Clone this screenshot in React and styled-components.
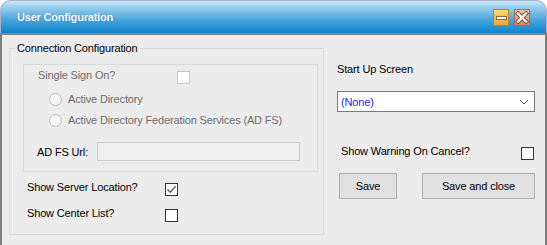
import React from "react"
import styled, { createGlobalStyle } from "styled-components"

const GlobalStyle = createGlobalStyle`
  html, body {
    margin: 0;
    padding: 0;
    background: #fff;
  }
  body {
    font-family: "Liberation Sans", Arial, sans-serif;
    font-size: 11px;
    letter-spacing: -0.15px;
  }
  * { box-sizing: border-box; }
`

const App = () => (
  <>
    <GlobalStyle />
    <Window>
      <TitleBar>
        <TitleText>User Configuration</TitleText>
        <TitleButtons>
          <MinButton>
            <MinBar />
          </MinButton>
          <CloseButton>
            <svg width="14" height="15" viewBox="0 0 14 15">
              <path d="M3 3.5 L11 11.5 M11 3.5 L3 11.5" stroke="#6b4a3a" strokeWidth="4.2" strokeLinecap="square" />
              <path d="M3 3.5 L11 11.5 M11 3.5 L3 11.5" stroke="#fff" strokeWidth="2.4" strokeLinecap="square" />
            </svg>
          </CloseButton>
        </TitleButtons>
      </TitleBar>

      <Body>
        <Group>
          <Legend>Connection Configuration</Legend>
          <DisabledPanel>
            <SsoRow>
              <Label $width={139} $disabled>Single Sign On?</Label>
              <CheckBox $disabled />
            </SsoRow>
            <RadioRow $top={10}>
              <Radio />
              <Label $disabled>Active Directory</Label>
            </RadioRow>
            <RadioRow $top={7}>
              <Radio />
              <Label $disabled>Active Directory Federation Services (AD FS)</Label>
            </RadioRow>
            <UrlRow>
              <Label $width={60}>AD FS Url:</Label>
              <UrlInput />
            </UrlRow>
          </DisabledPanel>
          <OptionRow $top={8}>
            <Label $width={138}>Show Server Location?</Label>
            <CheckBox>
              <svg width="11" height="11" viewBox="0 0 11 11">
                <path d="M1.5 5.5 L4.2 8.2 L9.6 2.2" fill="none" stroke="#5a5a5a" strokeWidth="1.3" />
              </svg>
            </CheckBox>
          </OptionRow>
          <OptionRow $top={12}>
            <Label $width={138}>Show Center List?</Label>
            <CheckBox />
          </OptionRow>
        </Group>

        <SideColumn>
          <Label>Start Up Screen</Label>
          <Select>
            <SelectValue>(None)</SelectValue>
            <svg width="10" height="6" viewBox="0 0 10 6">
              <path d="M1 1 L5 5 L9 1" fill="none" stroke="#555" strokeWidth="1" />
            </svg>
          </Select>
          <WarningRow>
            <Label>Show Warning On Cancel?</Label>
            <CheckBox />
          </WarningRow>
          <ButtonRow>
            <Button $width={58}>Save</Button>
            <Button $width={113} $gap={25}>Save and close</Button>
          </ButtonRow>
        </SideColumn>
      </Body>
    </Window>
  </>
)

const Window = styled.div`
  width: 547px;
  height: 245px;
  display: flex;
  flex-direction: column;
  overflow: hidden;
`

const TitleBar = styled.div`
  height: 33px;
  flex: none;
  display: flex;
  align-items: center;
  padding: 0 16px 0 16px;
  border: 1px solid #a9b2cf;
  border-bottom: none;
  border-radius: 11px 11px 0 0;
  background: linear-gradient(
    to bottom,
    #cde8f6 0%,
    #93cdec 22%,
    #4aa6dc 58%,
    #0d84cc 100%
  );
`

const TitleText = styled.div`
  flex: 1;
  color: #fff;
  font-weight: bold;
  font-size: 11px;
  letter-spacing: -0.2px;
  text-shadow: 0 0 1px rgba(0, 40, 90, 0.5);
`

const TitleButtons = styled.div`
  display: flex;
  gap: 5px;
  margin-top: 1px;
`

const MinButton = styled.div`
  width: 16px;
  height: 17px;
  border: 1px solid #b98430;
  background: linear-gradient(to bottom, #fbd877, #e8a83a);
  display: flex;
  align-items: center;
  justify-content: center;
`

const MinBar = styled.div`
  width: 11px;
  height: 4px;
  background: #fff;
  border: 1px solid #8a6a3a;
`

const CloseButton = styled.div`
  width: 16px;
  height: 17px;
  border: 1px solid #b0694a;
  background: linear-gradient(to bottom, #f5c3a6, #d8835c);
  display: flex;
  align-items: center;
  justify-content: center;
`

const Body = styled.div`
  flex: 1;
  display: flex;
  background: #ececec;
  border-top: 2px solid #808890;
  border-left: 2px solid #7d7d7d;
  border-right: 2px solid #7d7d7d;
`

const Group = styled.fieldset`
  margin: 7px 0 0 7px;
  width: 315px;
  height: 193px;
  border: 1px solid #dadada;
  padding: 9px 5px 0 5px;
  min-width: 0;
  display: flex;
  flex-direction: column;
`

const Legend = styled.legend`
  padding: 0 2px;
  line-height: 13px;
  color: #000;
`

const DisabledPanel = styled.div`
  margin-left: 8px;
  height: 108px;
  flex: none;
  border: 1px solid #dadada;
  padding: 3px 0 0 14px;
  display: flex;
  flex-direction: column;
`

const Label = styled.span`
  display: inline-block;
  line-height: 14px;
  white-space: nowrap;
  width: ${p => (p.$width ? `${p.$width}px` : "auto")};
  flex: none;
  color: ${p => (p.$disabled ? "#6d6d6d" : "#000")};
`

const CheckBox = styled.div`
  width: 13px;
  height: 13px;
  flex: none;
  margin-top: 4px;
  background: #fff;
  border: 1px solid ${p => (p.$disabled ? "#c8c8c8" : "#333")};
  display: flex;
  align-items: center;
  justify-content: center;
`

const SsoRow = styled.div`
  display: flex;
  align-items: center;
  height: 14px;
`

const RadioRow = styled.div`
  display: flex;
  align-items: center;
  gap: 6px;
  height: 14px;
  margin-top: ${p => p.$top}px;
  padding-left: 11px;
`

const Radio = styled.div`
  width: 13px;
  height: 13px;
  border-radius: 50%;
  background: #f6f6f6;
  border: 1px solid #bcbcbc;
  flex: none;
`

const UrlRow = styled.div`
  display: flex;
  align-items: center;
  height: 19px;
  margin-top: 15px;
  margin-left: -1px;
`

const UrlInput = styled.div`
  width: 203px;
  height: 19px;
  background: #f0f0f0;
  border: 1px solid #cccccc;
`

const OptionRow = styled.div`
  display: flex;
  align-items: center;
  height: 14px;
  margin-top: ${p => p.$top}px;
  margin-left: 12px;
`

const SideColumn = styled.div`
  margin-left: 13px;
  width: 198px;
  padding-top: 27px;
  display: flex;
  flex-direction: column;
`

const Select = styled.div`
  margin-top: 15px;
  height: 21px;
  background: #fff;
  border: 1px solid #7a7a7a;
  display: flex;
  align-items: center;
  padding: 0 5px 0 3px;
`

const SelectValue = styled.span`
  flex: 1;
  color: #1c1cf0;
`

const WarningRow = styled.div`
  display: flex;
  align-items: center;
  justify-content: space-between;
  height: 14px;
  margin-top: 32px;
  padding-left: 4px;
  padding-right: 1px;
`

const ButtonRow = styled.div`
  display: flex;
  margin-top: 15px;
  padding-left: 2px;
`

const Button = styled.div`
  width: ${p => p.$width}px;
  height: 26px;
  margin-left: ${p => p.$gap || 0}px;
  background: #e1e1e1;
  border: 1px solid #adadad;
  display: flex;
  align-items: center;
  justify-content: center;
  color: #000;
`

export default App
